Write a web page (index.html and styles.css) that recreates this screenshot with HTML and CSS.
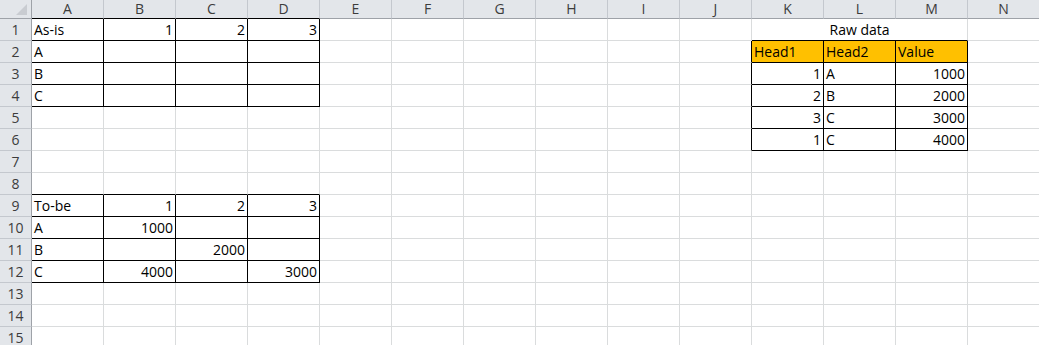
FILE: index.html
```html
<!DOCTYPE html>
<html lang="en">
<head>
    <meta charset="UTF-8">
    <title>Sheet1</title>
    <link rel="stylesheet" href="styles.css">
</head>
<body>

<table class="sheet">
    <colgroup>
        <col class="c-rh">
        <col><col><col><col><col><col><col><col><col><col><col><col><col><col>
    </colgroup>
    <tr class="colhead">
        <th class="corner"><svg width="31" height="18" viewBox="0 0 31 18"><polygon points="27,4 27,15 16,15" fill="#c9ccd1"/></svg></th>
        <th class="xb">A</th><th class="xb">B</th><th class="xb">C</th><th class="xb">D</th>
        <th>E</th><th>F</th><th>G</th><th>H</th><th>I</th><th>J</th><th>K</th><th>L</th><th>M</th><th>N</th>
    </tr>
    <tr>
        <th class="rh xr">1</th>
        <td class="x">As-is</td><td class="x n">1</td><td class="x n">2</td><td class="x n">3</td>
        <td></td><td></td><td></td><td></td><td></td><td></td>
        <td colspan="3" class="title xb">Raw data</td><td></td>
    </tr>
    <tr>
        <th class="rh xr">2</th>
        <td class="x">A</td><td class="x"></td><td class="x"></td><td class="x"></td>
        <td></td><td></td><td></td><td></td><td></td><td class="xr"></td>
        <td class="x hd">Head1</td><td class="x hd">Head2</td><td class="x hd">Value</td><td></td>
    </tr>
    <tr>
        <th class="rh xr">3</th>
        <td class="x">B</td><td class="x"></td><td class="x"></td><td class="x"></td>
        <td></td><td></td><td></td><td></td><td></td><td class="xr"></td>
        <td class="x n">1</td><td class="x">A</td><td class="x n">1000</td><td></td>
    </tr>
    <tr>
        <th class="rh xr">4</th>
        <td class="x">C</td><td class="x"></td><td class="x"></td><td class="x"></td>
        <td></td><td></td><td></td><td></td><td></td><td class="xr"></td>
        <td class="x n">2</td><td class="x">B</td><td class="x n">2000</td><td></td>
    </tr>
    <tr>
        <th class="rh">5</th>
        <td></td><td></td><td></td><td></td>
        <td></td><td></td><td></td><td></td><td></td><td class="xr"></td>
        <td class="x n">3</td><td class="x">C</td><td class="x n">3000</td><td></td>
    </tr>
    <tr>
        <th class="rh">6</th>
        <td></td><td></td><td></td><td></td>
        <td></td><td></td><td></td><td></td><td></td><td class="xr"></td>
        <td class="x n">1</td><td class="x">C</td><td class="x n">4000</td><td></td>
    </tr>
    <tr>
        <th class="rh">7</th>
        <td></td><td></td><td></td><td></td><td></td><td></td><td></td><td></td><td></td><td></td><td></td><td></td><td></td><td></td>
    </tr>
    <tr>
        <th class="rh">8</th>
        <td class="xb"></td><td class="xb"></td><td class="xb"></td><td class="xb"></td>
        <td></td><td></td><td></td><td></td><td></td><td></td><td></td><td></td><td></td><td></td>
    </tr>
    <tr>
        <th class="rh xr">9</th>
        <td class="x">To-be</td><td class="x n">1</td><td class="x n">2</td><td class="x n">3</td>
        <td></td><td></td><td></td><td></td><td></td><td></td><td></td><td></td><td></td><td></td>
    </tr>
    <tr>
        <th class="rh xr">10</th>
        <td class="x">A</td><td class="x n">1000</td><td class="x"></td><td class="x"></td>
        <td></td><td></td><td></td><td></td><td></td><td></td><td></td><td></td><td></td><td></td>
    </tr>
    <tr>
        <th class="rh xr">11</th>
        <td class="x">B</td><td class="x"></td><td class="x n">2000</td><td class="x"></td>
        <td></td><td></td><td></td><td></td><td></td><td></td><td></td><td></td><td></td><td></td>
    </tr>
    <tr>
        <th class="rh xr">12</th>
        <td class="x">C</td><td class="x n">4000</td><td class="x"></td><td class="x n">3000</td>
        <td></td><td></td><td></td><td></td><td></td><td></td><td></td><td></td><td></td><td></td>
    </tr>
    <tr>
        <th class="rh">13</th>
        <td></td><td></td><td></td><td></td><td></td><td></td><td></td><td></td><td></td><td></td><td></td><td></td><td></td><td></td>
    </tr>
    <tr>
        <th class="rh">14</th>
        <td></td><td></td><td></td><td></td><td></td><td></td><td></td><td></td><td></td><td></td><td></td><td></td><td></td><td></td>
    </tr>
    <tr>
        <th class="rh">15</th>
        <td></td><td></td><td></td><td></td><td></td><td></td><td></td><td></td><td></td><td></td><td></td><td></td><td></td><td></td>
    </tr>
</table>

</body>
</html>
```

FILE: styles.css
```css
body {
    margin: 0;
    padding: 0;
    background-color: #fff;
    overflow: hidden;
    font-family: "Open Sans", Arial, sans-serif;
    font-size: 14px;
    color: #000;
}
.sheet {
    border-collapse: separate;
    border-spacing: 0;
    table-layout: fixed;
    width: 1040px;
}
.sheet col {
    width: 72px;
}
.sheet col.c-rh {
    width: 32px;
}
.sheet td {
    height: 21px;
    line-height: 21px;
    padding: 0 2px;
    border-right: 1px solid #dadcdd;
    border-bottom: 1px solid #dadcdd;
    white-space: nowrap;
    overflow: hidden;
    text-align: left;
}
.sheet th {
    background-color: #e3e6ea;
    color: #3c3c3c;
    font-weight: normal;
    padding: 0;
    border-right: 1px solid #c4c8ce;
    border-bottom: 1px solid #c4c8ce;
}
.colhead th {
    height: 18px;
    line-height: 18px;
    border-bottom-color: #9ea2a8;
}
.colhead th.corner {
    border-right-color: #9ea2a8;
}
.corner svg {
    display: block;
}
.sheet th.rh {
    height: 21px;
    line-height: 21px;
    border-right-color: #9ea2a8;
    text-align: center;
}
.sheet .n {
    text-align: right;
}
.sheet .title {
    text-align: center;
}
.sheet .hd {
    background-color: #ffc000;
}
.sheet .x {
    border-right-color: #000;
    border-bottom-color: #000;
}
.sheet .xb {
    border-bottom-color: #000;
}
.sheet .xr {
    border-right-color: #000;
}
```
